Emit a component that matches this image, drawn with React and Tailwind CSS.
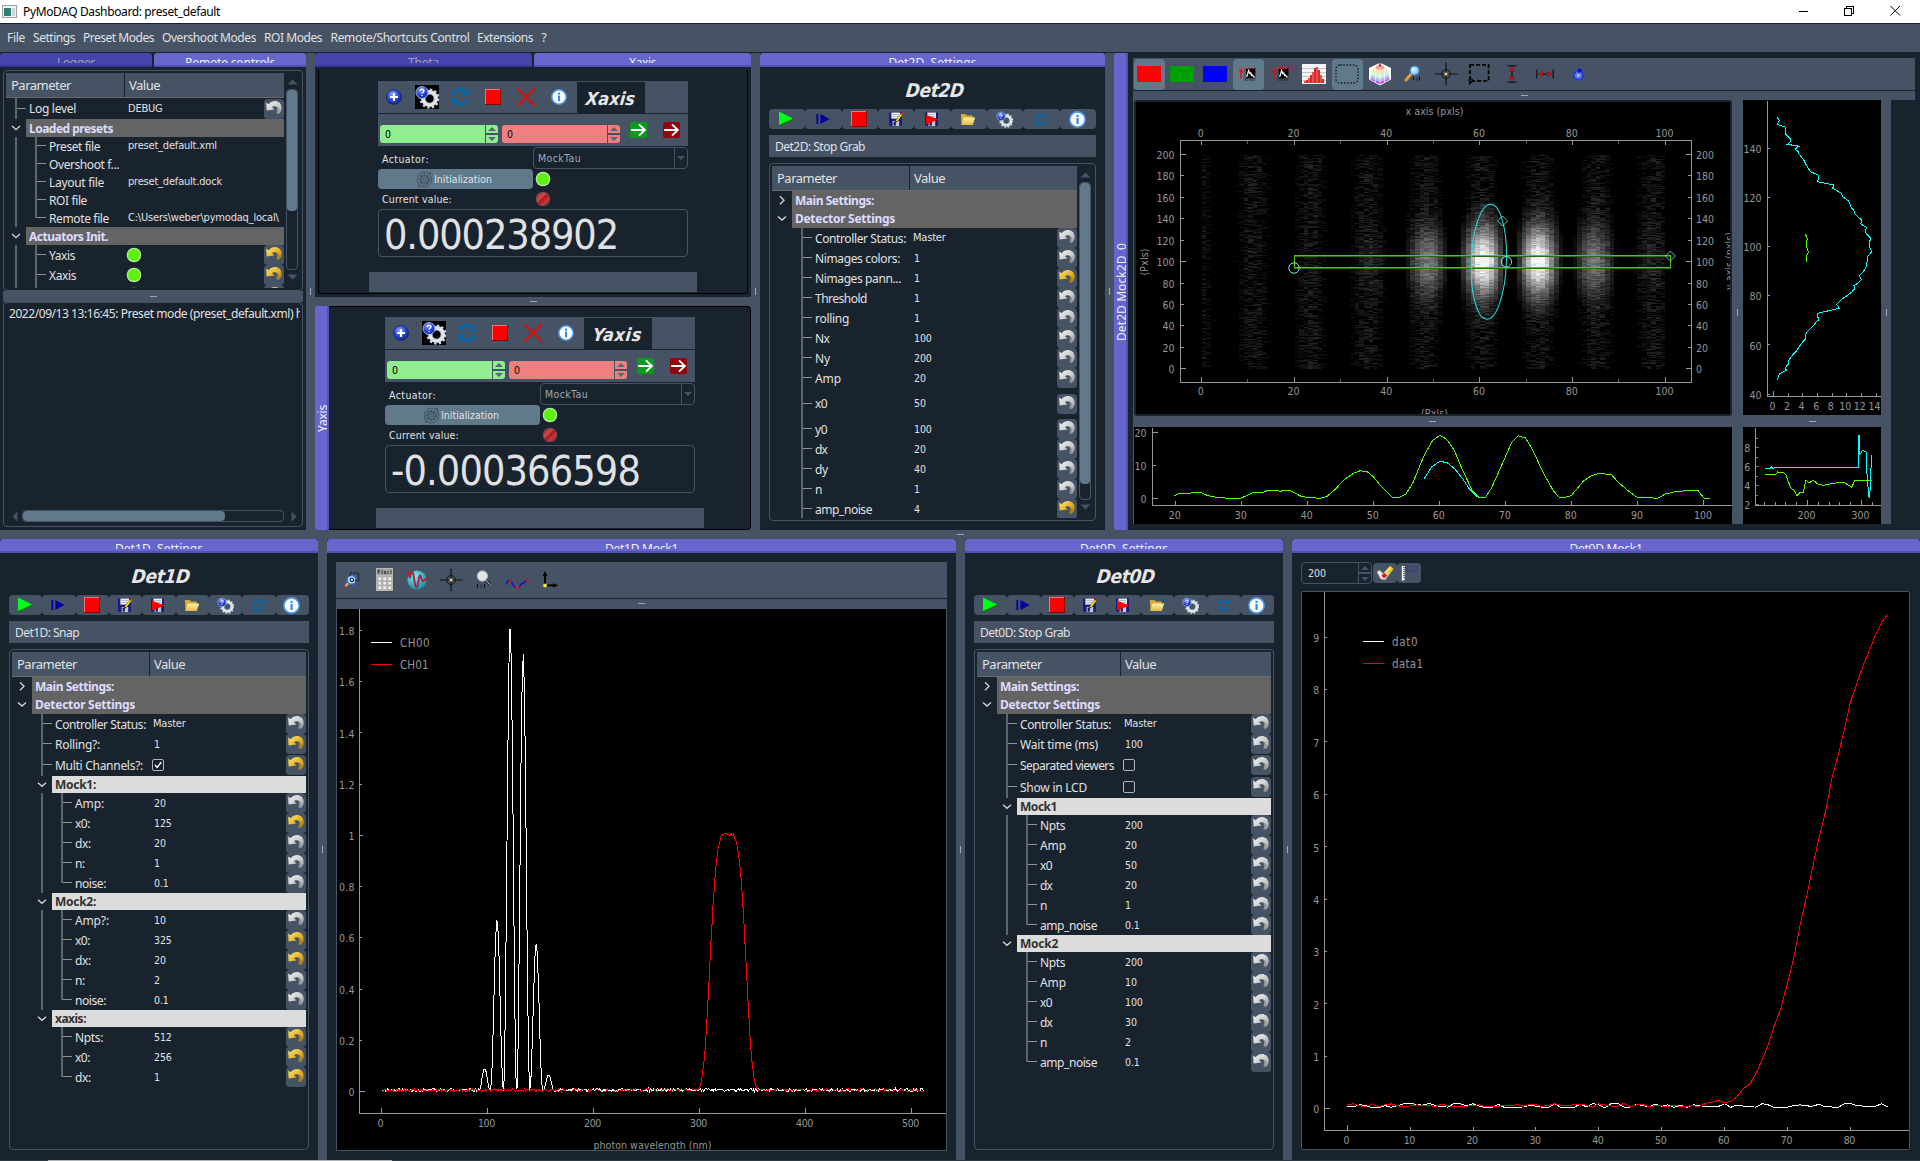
import React, { useLayoutEffect, useRef } from 'react';

/* ---------- text helpers ---------- */

const UI = "font-['Noto_Sans',sans-serif]";
const TH = "font-['DejaVu_Sans_Condensed','DejaVu_Sans',sans-serif]";

// Text whose tracking is adjusted so that it fills the width w.
function T({ w, children, className = '' }) {
  const ref = useRef(null);
  useLayoutEffect(() => {
    const el = ref.current;
    if (!el || !w) return;
    el.style.letterSpacing = '0px';
    const n = String(children).length;
    const natural = el.getBoundingClientRect().width;
    el.style.letterSpacing = (w - natural) / n + 'px';
  }, [w, children]);
  return <span ref={ref} className={'inline-block whitespace-pre ' + className}>{children}</span>;
}

function VT({ w, children, className = '' }) {
  const ref = useRef(null);
  useLayoutEffect(() => {
    const el = ref.current;
    el.style.letterSpacing = '0px';
    const natural = el.getBoundingClientRect().height;
    el.style.letterSpacing = (w - natural) / String(children).length + 'px';
  }, [w, children]);
  return <span ref={ref} className={'inline-block rotate-180 whitespace-pre [writing-mode:vertical-rl] ' + className}>{children}</span>;
}

/* ---------- icons ---------- */

function Defs() {
  return (
    <svg width="0" height="0" className="absolute">
      <defs>
        <linearGradient id="silver" x1="0" y1="0" x2="1" y2="1"><stop offset="0" stopColor="#f4f4f4" /><stop offset="0.6" stopColor="#c9c9c9" /><stop offset="1" stopColor="#8a8a8a" /></linearGradient>
        <linearGradient id="gold" x1="0" y1="0" x2="1" y2="1"><stop offset="0" stopColor="#ffe873" /><stop offset="0.6" stopColor="#e0ad20" /><stop offset="1" stopColor="#8f6a10" /></linearGradient>
        <radialGradient id="blueBall" cx="0.4" cy="0.3" r="0.8"><stop offset="0" stopColor="#8aa4ff" /><stop offset="0.5" stopColor="#2c49dd" /><stop offset="1" stopColor="#0c1a8c" /></radialGradient>
        <radialGradient id="greenLed" cx="0.5" cy="0.5" r="0.5"><stop offset="0" stopColor="#62f410" /><stop offset="0.75" stopColor="#5cf00c" /><stop offset="1" stopColor="#7cff40" /></radialGradient>
        <linearGradient id="redLed" x1="0" y1="0" x2="1" y2="1"><stop offset="0" stopColor="#8c161c" /><stop offset="0.35" stopColor="#cc4c50" /><stop offset="0.5" stopColor="#b0141c" /><stop offset="0.7" stopColor="#c23c40" /><stop offset="1" stopColor="#80161a" /></linearGradient>
        <radialGradient id="lens" cx="0.4" cy="0.4" r="0.7"><stop offset="0" stopColor="#e8f8ff" /><stop offset="1" stopColor="#5cb0f0" /></radialGradient>
        <radialGradient id="globe" cx="0.4" cy="0.3" r="0.8"><stop offset="0" stopColor="#7fe8f4" /><stop offset="1" stopColor="#0f7f9c" /></radialGradient>
        <linearGradient id="folder" x1="0" y1="0" x2="0" y2="1"><stop offset="0" stopColor="#fff3a8" /><stop offset="1" stopColor="#e3b944" /></linearGradient>
      </defs>
    </svg>
  );
}

const Undo = ({ gold }) => (
  <svg width="20" height="20" viewBox="0 0 20 20" className="block">
    <rect width="20" height="20" rx="3.5" fill="#455364" />
    <path d="M2.2 3.6 L4.6 5.2 C7.6 1.6 12.4 0.9 15.4 3.6 C18.6 6.6 18.8 12 14.8 15 C15.4 11.4 14.8 8.4 12 7.4 C10.4 6.9 9 7.2 8 8 L10.4 10.4 L2.6 11.4 Z" fill={gold ? 'url(#gold)' : 'url(#silver)'} />
    <path d="M10.2 10.4 L13.2 11 L12.4 14.2 L14.8 15 C15.4 11.4 14.8 8.4 12 7.4 C13.4 8.8 13.4 9.6 13 10.8 Z" fill={gold ? '#b08518' : '#9a9a9a'} />
  </svg>
);

const Led = ({ red, size = 16 }) => (
  <svg width={size} height={size} viewBox="0 0 16 16" className="block shrink-0">
    <circle cx="8" cy="8" r="7.3" fill={red ? '#5a4c4e' : '#cfdcc8'} />
    <circle cx="8" cy="8" r="6.5" fill={red ? 'url(#redLed)' : 'url(#greenLed)'} />
  </svg>
);

const Stop = ({ s = 16 }) => (
  <svg width={s} height={s} viewBox="0 0 16 16" shapeRendering="crispEdges" className="block">
    <rect width="16" height="16" fill="#8c0000" /><rect width="15" height="15" fill="#ff7070" /><rect x="1" y="1" width="14" height="14" fill="#ff0000" />
  </svg>
);

const Plus = () => (
  <svg width="16" height="16" viewBox="0 0 16 16" className="block">
    <circle cx="8" cy="8" r="7.3" fill="url(#blueBall)" stroke="#0c1a70" strokeWidth="0.8" />
    <path d="M8 4 V12 M4 8 H12" stroke="#fff" strokeWidth="2.2" />
  </svg>
);

const Refresh = ({ s = 20 }) => (
  <svg width={s} height={s} viewBox="0 0 20 20" className="block">
    <path d="M2.4 8 C3.6 3.2 9.6 0.6 14.6 4.2" fill="none" stroke="#0a64a4" strokeWidth="3.2" />
    <path d="M19 1 V8.6 H11 Z" fill="#0a64a4" />
    <path d="M17.6 12 C16.4 16.8 10.4 19.4 5.4 15.8" fill="none" stroke="#0a64a4" strokeWidth="3.2" />
    <path d="M1 19 V11.4 H9 Z" fill="#0a64a4" />
  </svg>
);

const Info = ({ s = 16 }) => (
  <svg width={s} height={s} viewBox="0 0 16 16" className="block">
    <circle cx="8" cy="8" r="7.2" fill="#fff" stroke="#4c9be8" strokeWidth="1.5" />
    <rect x="7" y="6.6" width="2.1" height="5.6" fill="#2b8be8" /><rect x="7" y="3.6" width="2.1" height="2" fill="#2b8be8" />
  </svg>
);

const Cross = () => (
  <svg width="20" height="20" viewBox="0 0 20 20" className="block">
    <path d="M1.5 1.5 L18.5 18.5 M18.5 1.5 L1.5 18.5" stroke="#8a3030" strokeWidth="2.2" />
    <path d="M1.5 1.5 L18.5 18.5 M18.5 1.5 L1.5 18.5" stroke="#ff0000" strokeWidth="1.5" />
  </svg>
);

const Gear = ({ s = 24, bg }) => (
  <svg width={s} height={s} viewBox="0 0 24 24" className="block">
    {bg && <rect width="24" height="24" fill="#000" />}
    <circle cx="14.6" cy="13.6" r="6.4" fill="none" stroke="#dfe5ea" strokeWidth="4.2" />
    <circle cx="14.6" cy="13.6" r="9" fill="none" stroke="#d3dade" strokeWidth="2.2" strokeDasharray="2.4 2.3" />
    <circle cx="14.6" cy="13.6" r="4.4" fill="none" stroke="#8f9aa2" strokeWidth="0.8" />
    <circle cx="7" cy="7.5" r="6" fill="url(#blueBall)" stroke="#a9bfe0" strokeWidth="0.9" />
    <path d="M5.2 6 C5.4 3.6 9.2 3.8 8.9 6 C8.7 7.3 7.1 7.2 7.1 8.6 M7.1 10 V11.1" fill="none" stroke="#fff" strokeWidth="1.4" />
  </svg>
);

const GoArrow = ({ color }) => (
  <svg width="17" height="16" viewBox="0 0 17 16" className="block">
    <rect width="17" height="16" rx="2" fill={color} />
    <path d="M1.2 8 H14.4 M9 2.4 L14.9 8 L9 13.6" fill="none" stroke="#fff" strokeWidth="1.9" />
  </svg>
);

const Play = () => (
  <svg width="17" height="16" viewBox="0 0 17 16" className="block">
    <path d="M1 1 L16.4 8.2 L1 15.4 Z" fill="#007a00" /><path d="M1 0.6 L15 7.4 L1 14 Z" fill="#00ff1a" />
  </svg>
);

const Step = () => (
  <svg width="14" height="12" viewBox="0 0 14 12" className="block">
    <rect x="0.4" y="1" width="1.8" height="10" fill="#0000a0" /><path d="M4.4 1 L13.6 6 L4.4 11 Z" fill="#0000a0" />
  </svg>
);

const Floppy = ({ snap }) => (
  <svg width="16" height="16" viewBox="0 0 16 16" className="block">
    <path d="M1 1.6 H14 V15 H2.4 L1 13.6 Z" fill="#1a1a80" />
    <rect x="3.4" y="1.6" width="8.6" height="6" fill="#f2f2f2" />
    <path d="M4.2 3.4 H11 M4.2 5.4 H11" stroke="#8c9fb8" strokeWidth="0.7" />
    <rect x="4.6" y="10" width="6.6" height="5" fill="#c4c8d0" /><rect x="5.6" y="10.8" width="2.2" height="3.8" fill="#15155e" />
    {snap ? <path d="M2 3.8 L14.6 8.6 L2 13.4 Z" fill="#ff0000" /> : (
      <g><path d="M7.6 9.6 L13 2.6 L14.6 3.8 L9.4 10.6 L7 11.6 Z" fill="#ffe800" stroke="#222" strokeWidth="0.4" /><path d="M13 2.6 L14.2 0.8 L16 2.2 L14.8 3.8 Z" fill="#e02020" /><path d="M7.6 9.6 L9.2 10.6 L7 11.6 Z" fill="#111" /></g>
    )}
  </svg>
);

const Folder = () => (
  <svg width="16" height="14" viewBox="0 0 16 14" className="block">
    <path d="M0.8 2 H5.6 L7 3.6 H12.6 V12.6 H1.6 Z" fill="#d8a93a" /><path d="M3.6 5.4 H15.2 L12.8 13 H1.2 Z" fill="url(#folder)" />
    <path d="M12 2.2 L14.8 0.8 L15.6 3" fill="none" stroke="#1d5d80" strokeWidth="1.4" />
  </svg>
);

const InitGear = () => (
  <svg width="17" height="17" viewBox="0 0 17 17" className="block" fill="none" stroke="#3f5160">
    <path d="M3 13.4 A7.5 7.5 0 0 1 13 2.4 M14 3.6 A7.5 7.5 0 0 1 4 14.6" strokeWidth="1" />
    <circle cx="8.5" cy="8.5" r="4.6" strokeWidth="1.8" strokeDasharray="2.2 1.1" /><circle cx="8.5" cy="8.5" r="3.8" strokeWidth="0.9" /><circle cx="8.5" cy="8.5" r="1.8" strokeWidth="1" />
    <rect x="13" y="1.4" width="2" height="2" fill="#3f5160" stroke="none" /><rect x="2" y="13.6" width="2" height="2" fill="#3f5160" stroke="none" />
  </svg>
);

const RoiIcon = () => (
  <svg width="20" height="20" viewBox="0 0 20 20" className="block">
    <path d="M1 4 H8" stroke="#ff2020" strokeDasharray="2 1" strokeWidth="1" />
    <path d="M3 14.6 V7" stroke="#ff0000" strokeWidth="1.2" /><path d="M0.6 8.4 L3 4.8 L5.4 8.4 Z" fill="#ff0000" />
    <rect x="8" y="4" width="9.4" height="10.4" fill="#000" /><path d="M8 4.4 H17.4" stroke="#ff2020" strokeDasharray="2 1" />
    <path d="M8.6 13 L9.6 10 L10.6 6.4 L11.8 9.6 L12.8 9 L13.6 11.6 L14.6 11 L15.6 13 L17.2 13" fill="none" stroke="#fff" strokeWidth="1.2" />
    <path d="M6.6 16 H17" stroke="#303030" strokeDasharray="1.4 0.8" strokeWidth="1.6" /><path d="M7 5 V15" stroke="#303030" strokeDasharray="1.4 0.8" strokeWidth="1.2" />
  </svg>
);

const Histo = () => (
  <svg width="24" height="20" viewBox="0 0 24 20" shapeRendering="crispEdges" className="block">
    <rect width="24" height="20" fill="#f4f4f4" /><path d="M0 4.5 H24 M0 8.5 H24 M0 12.5 H24 M0 16.5 H24" stroke="#c4c4c4" />
    {[[3, 2], [5, 3], [7, 5], [9, 8], [11, 11], [13, 15], [15, 16], [17, 13], [19, 8], [21, 4]].map(([x, h], i) => <rect key={x} x={x - 1} y={19 - h} width="2" height={h} fill={i % 2 ? '#d82828' : '#e85050'} />)}
  </svg>
);

const RoiDash = () => (
  <svg width="24" height="20" viewBox="0 0 24 20" className="block"><rect x="1" y="1" width="22" height="18" rx="4" fill="none" stroke="#1a2028" strokeWidth="1.4" strokeDasharray="1.6 1.6" /></svg>
);

const Cube = () => (
  <svg width="24" height="24" viewBox="0 0 24 24" className="block">
    <path d="M12 0.8 L23 6 V17.6 L12 23.4 L1 17.6 V6 Z" fill="#fff" />
    <path d="M12 1.4 L6 6 L12 8.6 L18 6 Z" fill="#ff9a9a" /><path d="M6 6 L12 8.6 L18 6 L20 9 L12 12 L4 9 Z" fill="#ffe0a8" />
    <path d="M4 9 L12 12 V17 L3 13.4 Z" fill="#c4f4b8" /><path d="M20 9 L12 12 V17 L21 13.4 Z" fill="#b8e8f8" />
    <path d="M3 13.4 L12 17 V20 L2.4 16.4 Z" fill="#b0b8ff" /><path d="M21 13.4 L12 17 V20 L21.6 16.4 Z" fill="#c0a8ff" />
    <path d="M2.4 16.4 L12 20 L21.6 16.4 L21 17.8 L12 22.6 L3 17.8 Z" fill="#b040f0" />
    <path d="M12 5 V22 M7.5 4 V20 M16.5 4 V20 M2 10 L12 14 L22 10" stroke="#fff" strokeWidth="0.8" fill="none" opacity="0.85" />
    <path d="M12 0.8 V5" stroke="#222" strokeWidth="1" />
  </svg>
);

const Zoom11 = () => (
  <svg width="18" height="18" viewBox="0 0 18 18" className="block">
    <path d="M7.6 8.4 L2 15" stroke="#e89a3a" strokeWidth="3" strokeLinecap="round" />
    <circle cx="10.6" cy="5.6" r="4.6" fill="url(#lens)" stroke="#3f7fd0" strokeWidth="1" />
    <path d="M9.5 11.5 V15.5 M13 12.5 V13.5 M13 14.5 V15.5 M15.5 11.5 V15.5" stroke="#111" strokeWidth="1" />
  </svg>
);

const ZoomGrey = () => (
  <svg width="20" height="22" viewBox="0 0 20 22" className="block">
    <path d="M11 10 L16 15.6" stroke="#222" strokeWidth="3" /><path d="M11 10 L16 15.6" stroke="#ddd" strokeWidth="1" />
    <circle cx="8.4" cy="7" r="5.2" fill="#dfe7e0" stroke="#aab" strokeWidth="1" />
    <path d="M3.5 15 V19 M7 15.8 V16.8 M7 18 V19 M10.5 15 V19" stroke="#111" strokeWidth="1.1" />
  </svg>
);

const Crosshair = () => (
  <svg width="24" height="24" viewBox="0 0 24 24" className="block">
    <path d="M12 0.5 V23.5 M0.5 12 H23.5" stroke="#10151a" strokeWidth="1.2" /><circle cx="12" cy="12" r="4.4" fill="none" stroke="#10151a" strokeWidth="1" />
    <circle cx="12" cy="12" r="1.8" fill="#e8e060" stroke="#333" strokeWidth="0.5" />
  </svg>
);

const Lasso = () => (
  <svg width="22" height="22" viewBox="0 0 22 22" className="block">
    <rect x="2" y="1.8" width="18.6" height="16" fill="none" stroke="#000" strokeWidth="1.8" strokeDasharray="4 2" />
    <circle cx="2.8" cy="17.6" r="2" fill="#333" stroke="#000" /><path d="M3 18 L1.4 21.6" stroke="#000" strokeWidth="1.4" />
  </svg>
);

const VArrows = () => (
  <svg width="10" height="18" viewBox="0 0 10 18" className="block"><path d="M0.5 0.8 H9.5 M0.5 17.2 H9.5 M5 3 V15" stroke="#111" strokeWidth="1.2" /><path d="M2.6 6.4 L5 2 L7.4 6.4 Z M2.6 11.6 L5 16 L7.4 11.6 Z" fill="#e01010" stroke="#500" strokeWidth="0.4" /></svg>
);
const HArrows = () => (
  <svg width="18" height="10" viewBox="0 0 18 10" className="block"><path d="M0.8 0.5 V9.5 M17.2 0.5 V9.5 M3 5 H15" stroke="#111" strokeWidth="1.2" /><path d="M6.4 2.6 L2 5 L6.4 7.4 Z M11.6 2.6 L16 5 L11.6 7.4 Z" fill="#e01010" stroke="#500" strokeWidth="0.4" /></svg>
);
const Rotate = () => (
  <svg width="11" height="13" viewBox="0 0 11 13" className="block"><circle cx="5.4" cy="7.4" r="4.4" fill="#5a80c8" stroke="#1c2cff" strokeWidth="1.8" strokeDasharray="2 0.6" /><circle cx="5.4" cy="7.4" r="1.4" fill="#9fc0ff" /><path d="M5.4 0 L9.4 2.6 L5.4 5.2 Z" fill="#0000f0" /></svg>
);

const ZoomRoi = () => (
  <svg width="16" height="16" viewBox="0 0 16 16" className="block">
    <path d="M5 10 L1.6 14.2" stroke="#f0a050" strokeWidth="2.6" /><circle cx="7.6" cy="7.8" r="4.4" fill="#cfe6ff" stroke="#2c70e8" strokeWidth="1.6" />
    <circle cx="7.8" cy="7.8" r="1.8" fill="none" stroke="#111" strokeWidth="1.1" /><path d="M6 4 V1 H14.6 V8.4 H10" fill="none" stroke="#111" strokeDasharray="2 1" />
  </svg>
);
const Calculator = () => (
  <svg width="18" height="24" viewBox="0 0 18 24" className="block">
    <rect x="0" y="0" width="18" height="24" fill="#4d4d48" /><rect x="0" y="0" width="17" height="23" fill="#b9b9b3" /><rect x="1" y="1" width="15" height="6" fill="#a2a29c" />
    <path d="M2 2 V6 M2 2 H4 M2 4 H4 M6.5 2 Q5 4 6.5 6 M8 3 L10 6 M10 3 L8 6 M12 3 V6 M14.5 2 Q16 4 14.5 6" stroke="#222" strokeWidth="0.8" fill="none" />
    {[9, 13.5, 18].map((y) => [2, 7, 12].map((x) => <rect key={x + '-' + y} x={x} y={y} width="3.6" height="3.4" fill="#f2f2ee" stroke="#888" strokeWidth="0.4" />))}
  </svg>
);
const GlobeWave = () => (
  <svg width="24" height="22" viewBox="0 0 24 22" className="block">
    <circle cx="11" cy="11" r="9.6" fill="url(#globe)" /><path d="M0.8 4 C2 2 3 5 4 9 C5 2 6.6 1 7.6 6 C8.6 14 9.4 19 11 18 C12.4 16 12.6 7 14 6.4 C15.4 7 15.4 12 17 12 C18 12 18.4 9.4 23.4 9" fill="none" stroke="#a32438" strokeWidth="1.9" />
  </svg>
);
const Wave = () => (
  <svg width="24" height="12" viewBox="0 0 24 12" className="block">
    <path d="M1 6.5 C3 2 5 1 6.4 3.6 C8 7 9 9.6 12 9.6 C15 9.6 16 5 18 5 C20 5 20 2 23 2" fill="none" stroke="#1010c8" strokeWidth="1.6" />
    <path d="M3 3 L6.4 1 L6.4 4 Z M10 8 H14.6 L12.2 11.6 Z M19 1.6 H23.4 V4 Z" fill="#f01818" />
  </svg>
);
const AxesIcon = () => (
  <svg width="18" height="20" viewBox="0 0 18 20" className="block">
    <path d="M4 4 V15.4 H14" fill="none" stroke="#000" strokeWidth="1.8" /><path d="M1.8 6 L4 0.8 L6.2 6 Z M12 13.2 L17.4 15.4 L12 17.6 Z" fill="#000" /><circle cx="4" cy="15.4" r="2" fill="#f4e832" />
  </svg>
);
const Eraser = () => (
  <svg width="18" height="16" viewBox="0 0 18 16" className="block">
    <path d="M0.8 7 L3.6 5 L7 8.6 L14 1 L17.4 4 L9 15 L4.6 14 Z" fill="#f3efe6" stroke="#7a7a7a" strokeWidth="0.5" />
    <path d="M9.4 6.6 L14 1 L17.4 4 L12.4 9.6 Z" fill="#f4c21c" /><path d="M10.8 6.8 L14.4 2.6" stroke="#fff2a0" strokeWidth="1.2" /><path d="M5.4 10.4 L8.4 7.8 L11.4 10.8 L8 13.6 Z" fill="#e01c1c" />
  </svg>
);
const LcdRuler = () => (
  <svg width="19" height="16" viewBox="0 0 19 16" className="block">
    <rect x="1" y="1" width="3.6" height="14.4" fill="#fff" /><rect x="1" y="1" width="1" height="14.4" fill="#2c7fd0" /><path d="M4.6 2.5 H3 M4.6 4.5 H3 M4.6 6.5 H3 M4.6 8.5 H3 M4.6 10.5 H3 M4.6 12.5 H3" stroke="#333" strokeWidth="0.8" />
    <text x="5.4" y="7.4" fontFamily="Liberation Sans" fontSize="8.5" textLength="12.4" lengthAdjust="spacingAndGlyphs" fill="#343a86">123</text>
  </svg>
);

/* ---------- dock furniture ---------- */

const VSplit = ({ top }) => (
  <div className="flex w-[9px] shrink-0 justify-center bg-[#455364]"><div className="h-[7px] w-px bg-[#9da9b5]" style={{ marginTop: top }} /></div>
);
const Dash = () => <div className="h-px w-[7px] bg-[#9da9b5]" />;

function Tab({ children, dim, w }) {
  return (
    <div className={`h-[14px] flex-1 rounded-t-[3px] border-b-2 ${dim ? 'border-[#3737a0] bg-[#4444aa]' : 'border-[#5151b8] bg-[#6666cc]'}`}>
      <div className={`flex h-[10px] justify-center overflow-hidden pt-[1px] text-[12px] leading-[17px] ${dim ? 'text-[#a0a0b8]' : 'text-[#f0f0ff]'} ${UI}`}><T w={w}>{children}</T></div>
    </div>
  );
}

function VTab({ children, w }) {
  return (
    <div className={`flex w-[14px] shrink-0 items-center justify-center overflow-hidden rounded-l-[3px] border-r-2 border-[#5151b8] bg-[#6666cc] pl-[3px] text-[12px] leading-[14px] text-[#f0f0ff] ${UI}`}>
      <VT w={w}>{children}</VT>
    </div>
  );
}

const Up = ({ c = '#455364' }) => <svg width="11" height="6" viewBox="0 0 11 6" className="block"><path d="M0.5 5.5 L5.5 0.5 L10.5 5.5 Z" fill={c} /></svg>;
const Down = ({ c = '#455364' }) => <svg width="11" height="6" viewBox="0 0 11 6" className="block"><path d="M0.5 0.5 L5.5 5.5 L10.5 0.5 Z" fill={c} /></svg>;

function VScroll({ handle }) {
  return (
    <div className="flex w-[12px] shrink-0 flex-col items-center pb-[8px] pt-[6px]">
      <Up />
      <div className="mt-[4px] w-[12px] flex-1 rounded-[4px] border border-[#455364] p-0"><div className="w-full rounded-[4px] bg-[#60798b]" style={{ height: handle }} /></div>
      <div className="mt-[4px]"><Down /></div>
    </div>
  );
}

/* ---------- parameter tree ---------- */

function Cell({ k }) {
  return (
    <svg width="20" height="100%" className="block shrink-0 overflow-hidden" shapeRendering="crispEdges">
      {(k === '|' || k === '+') && <rect x="9" y="0" width="2" height="100%" fill="#5c676d" />}
      {k === 'L' && <rect x="9" y="0" width="2" height="50%" fill="#5c676d" />}
      {(k === '+' || k === 'L') && <rect x="11" y="47%" width="9" height="1" fill="#8c9496" />}
      {k === 'v' && <svg x="5" y="35%" width="10" height="6" shapeRendering="auto"><path d="M1 0.8 L5 4.4 L9 0.8" fill="none" stroke="#d5d7d9" strokeWidth="1.3" /></svg>}
      {k === '>' && <svg x="7" y="24%" width="7" height="10" shapeRendering="auto"><path d="M1 1 L5 5 L1 9" fill="none" stroke="#d5d7d9" strokeWidth="1.3" /></svg>}
    </svg>
  );
}

// Row: [cells, label, value, kind, height, label width]
function Row({ r, split }) {
  const [cells, label, value, kind, h, lw] = r;
  const n = cells.length;
  const group = kind === 'g' || kind === 'G';
  return (
    <div className="flex shrink-0" style={{ height: h }}>
      {cells.split('').map((k, i) => <Cell key={i} k={k} />)}
      {group ? (
        <div className={`flex flex-1 items-center pl-[3px] text-[12px] font-bold ${UI} ${kind === 'g' ? 'bg-[#646464] pt-[1px] text-[#dcdcff]' : 'bg-[#dcdcdc] text-[#323232]'}`}><T w={lw}>{label}</T></div>
      ) : (
        <>
          <div className={`flex items-center overflow-hidden pl-[3px] pt-[1px] text-[12px] text-[#e0e1e3] ${UI}`} style={{ width: split - n * 20 + 1 }}><T w={lw} className="tracking-[-0.3px]">{label}</T></div>
          <div className={`flex min-w-0 flex-1 items-center overflow-hidden text-[10.5px] text-[#e0e1e3] ${TH} ${value === 'on' || value === 'off' ? 'pl-[1px]' : value === 'led' ? 'pl-0' : /^[A-Zp]/.test(value) ? 'pl-[2px] pt-[1px]' : 'pl-[3px] pt-[1px]'}`}>
            {value === 'on' || value === 'off' ? (
              <span className="flex h-[12px] w-[12px] items-center justify-center rounded-[2px] border border-[#b0b4b8]">
                {value === 'on' && <svg width="8" height="8" viewBox="0 0 8 8"><path d="M1 4 L3.2 6.4 L7.2 1.2" fill="none" stroke="#fff" strokeWidth="1.5" /></svg>}
              </span>
            ) : value === 'led' ? <Led /> : <span className={`whitespace-nowrap ${/^[A-Zp]/.test(value) ? 'text-[11px] tracking-[-0.2px]' : 'tracking-[-0.1px]'}`}>{value}</span>}
          </div>
          {kind !== '' && <div className="flex w-[20px] items-center"><Undo gold={kind === 'y'} /></div>}
        </>
      )}
    </div>
  );
}

function Tree({ rows, split }) {
  return (
    <div className="flex min-w-0 flex-1 flex-col overflow-hidden">
      <div className={`flex h-[25px] shrink-0 items-center border-b border-[#6b6b6b] bg-[#455364] text-[13px] text-[#e0e1e3] ${UI}`}>
        <div className="flex h-full items-center border-r border-[#19232d] pl-[5px] pt-[2px]" style={{ width: split }}><T w={60}>Parameter</T></div>
        <div className="pl-[4px] pt-[2px]"><T w={31}>Value</T></div>
      </div>
      {rows.map((r, i) => <Row key={i} r={r} split={split} />)}
    </div>
  );
}

const u = (cells, label, value, gold, lw, h = 20) => [cells, label, value, gold ? 'y' : 'w', h, lw];

const rowsLeft = [
  u('+', 'Log level', 'DEBUG', false, 47, 21),
  ['v', 'Loaded presets', '', 'g', 18, 84],
  ['|+', 'Preset file', 'preset_default.xml', '', 18, 51],
  ['|+', 'Overshoot f...', '', '', 18, 70],
  ['|+', 'Layout file', 'preset_default.dock', '', 18, 55],
  ['|+', 'ROI file', '', '', 18, 38],
  ['|L', 'Remote file', 'C:\\Users\\weber\\pymodaq_local\\', '', 18, 60],
  ['v', 'Actuators Init.', '', 'g', 18, 79],
  u('|+', 'Yaxis', 'led', true, 26),
  u('|+', 'Xaxis', 'led', true, 27),
  u('|+', '', 'led', true, 0),
];

const head = [
  ['>', 'Main Settings:', '', 'g', 18, 79],
  ['v', 'Detector Settings', '', 'g', 19, 100],
  u('.+', 'Controller Status:', 'Master', false, 91),
];

const rows2D = [
  ...head,
  u('.+', 'Nimages colors:', '1', false, 85), u('.+', 'Nimages pann...', '1', true, 86), u('.+', 'Threshold', '1', false, 52), u('.+', 'rolling', '1', false, 34),
  u('.+', 'Nx', '100', false, 14), u('.+', 'Ny', '200', false, 15), u('.+', 'Amp', '20', false, 26), u('.+', 'x0', '50', false, 12, 31),
  u('.+', 'y0', '100', false, 12), u('.+', 'dx', '20', false, 12), u('.+', 'dy', '40', false, 13), u('.+', 'n', '1', false, 7), u('.+', 'amp_noise', '4', true, 57),
];

const rows1D = [
  ...head,
  u('.+', 'Rolling?:', '1', true, 45), u('.+', 'Multi Channels?:', 'on', true, 88, 22),
  ['.v', 'Mock1:', '', 'G', 17, 41],
  u('.|+', 'Amp:', '20', false, 29), u('.|+', 'x0:', '125', true, 15), u('.|+', 'dx:', '20', false, 16), u('.|+', 'n:', '1', false, 10), u('.|L', 'noise:', '0.1', false, 31),
  ['.v', 'Mock2:', '', 'G', 17, 41],
  u('.|+', 'Amp?:', '10', false, 34), u('.|+', 'x0:', '325', true, 15), u('.|+', 'dx:', '20', true, 16), u('.|+', 'n:', '2', false, 10), u('.|L', 'noise:', '0.1', false, 31),
  ['.v', 'xaxis:', '', 'G', 17, 31],
  u('..+', 'Npts:', '512', true, 28), u('..+', 'x0:', '256', true, 15), u('..L', 'dx:', '1', true, 16),
];

const mock0 = (p, amp, x0, dx, n) => [
  u(p + '+', 'Npts', '200', false, 25), u(p + '+', 'Amp', amp, false, 26), u(p + '+', 'x0', x0, false, 12), u(p + '+', 'dx', dx, false, 12), u(p + '+', 'n', n, false, 7), u(p + 'L', 'amp_noise', '0.1', false, 57),
];
const rows0D = [
  ...head,
  u('.+', 'Wait time (ms)', '100', false, 78), u('.+', 'Separated viewers', 'off', false, 94, 22), u('.+', 'Show in LCD', 'off', false, 67, 22),
  ['.v', 'Mock1', '', 'G', 17, 37],
  ...mock0('.|', '20', '50', '20', '1'),
  ['.v', 'Mock2', '', 'G', 17, 38],
  ...mock0('..', '10', '100', '30', '2'),
];

/* ---------- detector settings dock ---------- */

function DetSettings({ name, status, statusW, rows, split, width, scroll, tabW }) {
  const icons = [<Play />, <Step />, <Stop />, <Floppy />, <Floppy snap />, <Folder />, <Gear s={17} />, <Refresh s={13} />, <Info s={17} />];
  return (
    <div className="flex shrink-0 flex-col bg-[#19232d]" style={{ width }}>
      <div className="flex"><Tab w={tabW}>{name + '  Settings'}</Tab></div>
      <div className={`flex h-[42px] items-center justify-center pl-[4px] pt-[4px] text-[19px] font-bold italic text-[#e6e6e6] ${TH}`}><span className="-skew-x-6"><T w={61}>{name}</T></span></div>
      <div className="flex px-[9px]">
        {icons.map((ic, i) => <div key={i} className="flex h-[20px] flex-1 items-center justify-center rounded-[4px] bg-[#455364] pr-[1px]">{ic}</div>)}
      </div>
      <div className={`mx-[9px] mt-[6px] flex h-[22px] shrink-0 items-center bg-[#455364] pl-[6px] pt-[1px] text-[12px] text-[#e0e1e3] ${UI}`}><T w={statusW}>{status}</T></div>
      <div className={`mx-[9px] mt-[6px] flex min-h-0 flex-1 rounded-[4px] border border-[#455364] p-[2px] ${scroll ? 'mb-[9px] pr-[4px]' : 'mb-[10px]'}`}>
        <Tree rows={rows} split={split} />
        {scroll && <div className="ml-[2px] flex"><VScroll handle={301} /></div>}
      </div>
    </div>
  );
}

/* ---------- actuator dock ---------- */

function Spin({ green }) {
  return (
    <div className={`flex h-[18px] w-[118px] rounded-[3px] ${green ? 'bg-[#90ee90]' : 'bg-[#f08080]'}`}>
      <div className={`flex flex-1 items-center pl-[5px] pt-[2px] text-[10.5px] text-black ${TH}`}>0</div>
      <div className="flex w-[13px] flex-col justify-between border-l border-[#455364]">
        <div className="flex h-[9px] items-center justify-center border-b border-[#455364]"><svg width="8" height="4"><path d="M0 4 L4 0 L8 4Z" fill="#5a6672" /></svg></div>
        <div className="flex h-[9px] items-center justify-center border-t border-[#455364]"><svg width="8" height="4"><path d="M0 0 L4 4 L8 0Z" fill="#5a6672" /></svg></div>
      </div>
    </div>
  );
}

function Actuator({ name, value, valueW }) {
  const icons = [<Plus />, <Gear bg />, <Refresh />, <Stop />, <Cross />, <Info />];
  return (
    <div className="flex w-[328px] flex-col">
      <div className="ml-[9px] flex w-[310px] flex-col">
        <div className="flex h-[32px] bg-[#455364]">
          {icons.map((ic, i) => <div key={i} className="flex w-[33.1px] items-center justify-center pr-[2px]">{ic}</div>)}
          <div className={`mt-[1px] flex w-[68px] items-center justify-center bg-[#19232d] pl-[1px] pt-[1px] text-[18px] font-bold italic text-[#e6e6e6] ${TH}`}><span className="-skew-x-6"><T w={52}>{name}</T></span></div>
        </div>
        <div className="mt-[1px] flex h-[32px] items-start bg-[#455364] pl-[2px]">
          <div className="mt-[11px] flex gap-[4px]"><Spin green /><Spin /></div>
          <div className="ml-[10px] mt-[8px]"><GoArrow color="#0b9a1c" /></div>
          <div className="ml-[16px] mt-[8px]"><GoArrow color="#94060e" /></div>
        </div>
        <div className="mt-[1px] flex h-[22px]">
          <div className={`flex w-[155px] items-center pl-[4px] pt-[3px] text-[10.5px] text-[#e0e1e3] ${TH}`}><T w={47}>Actuator:</T></div>
          <div className="flex flex-1 rounded-[4px] border border-[#455364]">
            <div className={`flex flex-1 items-center pl-[4px] pt-[2px] text-[10.5px] text-[#9da9b5] ${TH}`}><T w={43}>MockTau</T></div>
            <div className="flex w-[13px] items-center justify-center border-l border-[#455364]"><svg width="8" height="4"><path d="M0 0 L4 4 L8 0Z" fill="#455364" /></svg></div>
          </div>
        </div>
        <div className="flex h-[20px] items-center">
          <div className={`flex h-full w-[155px] items-center rounded-[4px] bg-[#60798b] pl-[38px] text-[10.5px] text-[#dfe5ea] ${TH}`}><InitGear /><span className="ml-[1px] pt-[2px]"><T w={58}>Initialization</T></span></div>
          <div className="ml-[2px]"><Led /></div>
        </div>
        <div className="flex h-[20px] items-center">
          <div className={`flex w-[157px] items-center pl-[4px] pt-[2px] text-[10.5px] text-[#e0e1e3] ${TH}`}><T w={70}>Current value:</T></div>
          <Led red />
        </div>
        <div className={`flex h-[48px] items-center rounded-[4px] border border-[#455364] pl-[5px] pt-[5px] text-[41px] leading-none text-[#e0e1e3] ${TH}`}><T w={valueW}>{value}</T></div>
      </div>
      <div className="mt-[15px] h-[20px] bg-[#455364]" />
    </div>
  );
}

/* ---------- charts ---------- */

function rng(seed) {
  let s = seed;
  return () => { s = (s * 1664525 + 1013904223) % 4294967296; return s / 4294967296; };
}
const scale = (str, ox, oy, kx, ky) => str.trim().split(/\s+/).map((p) => { const [x, y] = p.split(',').map(Number); return (ox + x / kx).toFixed(1) + ',' + (oy + y / ky).toFixed(1); }).join(' ');

const AX = '#969696';
const Label = ({ x, y, a = 'middle', children, s = 10.5, w, ...rest }) => (
  <text x={x} y={y} textAnchor={a} fontFamily="'DejaVu Sans Condensed','DejaVu Sans',sans-serif" fontSize={s} fill={AX} dominantBaseline="central" textLength={w} {...rest}>{children}</text>
);

// Stripe pattern with noise, binned to grey levels, one path for each level.
function imagePaths() {
  const r = rng(7);
  const levels = {};
  const cw = 463.5 / 100, ch = 214 / 200;
  for (let i = 0; i < 100; i++) {
    const c = Math.cos((Math.PI * (i + 0.5 - 60.5)) / 12.35) ** 2;
    const gx = Math.exp(-((i + 0.5 - 66.6) ** 2) / (2 * 13.2 ** 2));
    for (let j = 0; j < 200; j++) {
      const gy = Math.exp(-((j - 100) ** 2) / (2 * 22 ** 2));
      const v = (22 * gx * gy + 3.8 * r()) * c;
      let g = Math.round(((v - 0.8) / 20.5) * 255);
      if (g < 6) continue;
      g = Math.min(244, Math.round(g / 6) * 6);
      const x0 = (1201.8 + i * cw).toFixed(2), x1 = (1201.8 + (i + 1) * cw).toFixed(2);
      const y0 = (368.5 - (j + 1) * ch).toFixed(2), y1 = (368.5 - j * ch).toFixed(2);
      (levels[g] = levels[g] || []).push(`M${x0} ${y0}H${x1}V${y1}H${x0}z`);
    }
  }
  return Object.entries(levels).map(([g, p]) => [g, p.join('')]);
}
const IMG = imagePaths();

function Image2D() {
  const X = (v) => 1201.5 + v * 4.638;
  const Y = (v) => 368.7 - v * 1.071;
  const ys = [0, 20, 40, 60, 80, 100, 120, 140, 160, 180, 200];
  const xs = [0, 20, 40, 60, 80, 100];
  return (
    <svg width="594" height="312" viewBox="1136 102 594 312" className="block bg-black">
      <g shapeRendering="crispEdges">{IMG.map(([g, d]) => <path key={g} d={d} fill={`rgb(${g},${g},${g})`} />)}</g>
      <path d="M1180.5 140.5 H1691.5 V382.5 H1180.5 Z" fill="none" stroke={AX} shapeRendering="crispEdges" />
      <g stroke={AX} shapeRendering="crispEdges">
        {ys.map((v) => { const l = v % 200 === 0 || v === 100 ? 5 : 3; return <path key={v} d={`M1181 ${Y(v)} h${l} M1691 ${Y(v)} h-${l}`} />; })}
        {xs.map((v) => <path key={v} d={`M${X(v)} 141 v4 M${X(v)} 382 v-5`} />)}
        {[10, 30, 50, 70, 90].map((v) => <path key={v} d={`M${X(v)} 141 v3 M${X(v)} 382 v-3`} opacity="0.6" />)}
      </g>
      {ys.map((v) => <g key={v}><Label x="1174.5" y={Y(v) + 0.5} a="end">{v}</Label><Label x="1696" y={Y(v) + 0.5} a="start">{v}</Label></g>)}
      {xs.map((v) => <g key={v}><Label x={X(v) - 0.7} y="133">{v}</Label><Label x={X(v) - 0.7} y="391">{v}</Label></g>)}
      <Label x="1434.5" y="110.5" w={58}>x axis (pxls)</Label>
      <Label x="1434.5" y="412.5" w={27}>(Pxls)</Label>
      <Label x="0" y="0" w={27} transform="translate(1143.5 262) rotate(-90)">(Pxls)</Label>
      <Label x="0" y="0" w={58} transform="translate(1729 261) rotate(-90)">y axis (pxls)</Label>
      <g shapeRendering="crispEdges" fill="none">
        <rect x="1294.5" y="256.5" width="376" height="12" stroke="#2a6a10" />
        <rect x="1294.5" y="255.5" width="376" height="12" stroke="#50c810" />
      </g>
      <ellipse cx="1488.8" cy="261.7" rx="17.6" ry="57.6" transform="rotate(2 1488.8 261.7)" fill="none" stroke="#20e0e0" strokeWidth="1" />
      <g fill="none" stroke="#80e8e8" strokeWidth="1">
        <circle cx="1294" cy="268" r="5.2" /><circle cx="1506.4" cy="261.8" r="5.2" />
        <path d="M1502.6 216 l5 5 l-5 5 l-5 -5 z M1670.4 251 l5 5 l-5 5 l-5 -5 z" opacity="0.8" />
      </g>
    </svg>
  );
}

function SideProfile() {
  const cy = '712,235 718,245 712,256 738,265 737,285 751,300 750,310 742,316 778,322 765,330 777,345 800,380 812,398 834,408 832,428 882,438 878,448 903,462 908,473 925,485 933,505 942,515 945,525 965,543 962,555 980,565 976,575 990,595 988,610 995,637 983,652 978,685 958,710 964,722 942,740 945,748 918,772 890,796 898,808 834,823 836,842 820,860 800,880 797,900 783,915 770,935 745,965 745,975 735,988 740,994 718,1005 712,1022';
  // small jitter between the coarse points of the trace
  const r = rng(3);
  const raw = cy.split(' ').map((p) => p.split(',').map(Number));
  const fine = [];
  raw.forEach((p, i) => {
    fine.push(p);
    const q = raw[i + 1];
    if (q && q[1] - p[1] > 14) fine.push([(p[0] + q[0]) / 2 + (r() - 0.5) * 8, (p[1] + q[1]) / 2]);
  });
  const gr = '796,585 802,598 799,620 805,640 800,650 799,668';
  const Y = (v) => 395 - (v - 40) * 2.46;
  return (
    <svg width="138" height="315" viewBox="1743 101 138 315" className="block bg-black" shapeRendering="crispEdges">
      <path d="M1767.5 102 V397.5 H1881" fill="none" stroke={AX} />
      {[40, 60, 80, 100, 120, 140].map((v) => <g key={v}><path d={`M1768 ${Y(v)} h2`} stroke={AX} /><Label x="1761.5" y={Y(v) + 0.8} a="end">{v}</Label></g>)}
      {[0, 2, 4, 6, 8, 10, 12, 14].map((v) => <g key={v}><path d={`M${1773.5 + v * 7.33} 397 v-${v === 0 ? 5 : 3}`} stroke={AX} /><Label x={1772.5 + v * 7.28} y="406.5">{v}</Label></g>)}
      <polyline points={scale(fine.map((p) => p.join(',')).join(' '), 1540, 40, 3, 3)} fill="none" stroke="#00ffff" />
      <polyline points={scale(gr, 1540, 40, 3, 3)} fill="none" stroke="#50ff00" />
    </svg>
  );
}

function BottomProfile() {
  const gr = '158,317 170,310 195,310 205,307 222,307 240,317 262,322 290,325 320,325 350,308 375,307 388,301 408,301 418,304 428,300 440,301 468,319 482,322 515,325 532,319 550,300 575,268 597,250 613,242 630,245 645,260 665,290 692,322 712,321 725,312 742,278 770,195 790,152 808,136 825,148 843,180 862,235 888,303 903,322 921,321 935,293 960,225 985,155 1000,137 1018,144 1035,178 1060,245 1085,300 1100,322 1118,321 1130,317 1160,273 1180,257 1198,250 1229,254 1245,277 1270,303 1290,321 1342,325 1360,312 1390,304 1440,301 1455,324 1470,325';
  const cy = '770,266 788,231 808,214 826,218 845,237 865,268 880,296 900,320';
  return (
    <svg width="598" height="97" viewBox="1134 427 598 97" className="block bg-black" shapeRendering="crispEdges">
      <path d="M1152.5 428 V505.5 H1732" fill="none" stroke={AX} />
      {[0, 10, 20].map((v) => <g key={v}><path d={`M1153 ${498.5 - v * 3.29} h${v === 10 ? 3 : 5}`} stroke={AX} /><Label x="1146.5" y={498.9 - v * 3.29} a="end">{v}</Label></g>)}
      {[20, 30, 40, 50, 60, 70, 80, 90, 100].map((v) => <g key={v}><path d={`M${1175.3 + (v - 20) * 6.603} 505 v-${v === 100 ? 5 : 4}`} stroke={AX} /><Label x={1174.7 + (v - 20) * 6.603} y="514.5">{v}</Label></g>)}
      <polyline points={scale(gr, 1110, 390, 2.45, 3)} fill="none" stroke="#50ff00" />
      <polyline points={scale(cy, 1110, 390, 2.45, 3)} fill="none" stroke="#00ffff" />
    </svg>
  );
}

function LineoutSmall() {
  const cy = '675,1286 690,1286 695,1281 700,1287 705,1282 955,1282 955,1187 958,1187 960,1243 968,1231 978,1235 982,1320 987,1370 989,1375 993,1285 995,1245';
  const gr = '675,1303 708,1303 713,1296 730,1297 738,1305 745,1325 753,1345 762,1350 770,1367 780,1357 790,1357 797,1321 808,1328 820,1321 835,1333 850,1336 870,1332 900,1327 912,1327 935,1342 945,1321 996,1321';
  return (
    <svg width="138" height="97" viewBox="1743 427 138 97" className="block bg-black" shapeRendering="crispEdges">
      <path d="M1755.5 428 V505.5 H1881" fill="none" stroke={AX} />
      {[2, 3, 4, 5, 6, 7, 8, 9].map((v) => <path key={v} d={`M1756 ${504.5 - (v - 2) * 9.43} h${v % 2 ? 2 : 3}`} stroke={AX} opacity="0.8" />)}
      {[2, 4, 6, 8].map((v) => <Label key={v} x="1747.2" y={505 - (v - 2) * 9.43}>{v}</Label>)}
      {[120, 140, 160, 180, 200, 220, 240, 260, 280, 300, 320].map((v) => <path key={v} d={`M${1807.5 + (v - 200) * 0.54} 505 v-${v % 100 ? 3 : 5}`} stroke={AX} />)}
      <Label x="1806.5" y="514.5">200</Label><Label x="1860.5" y="514.5">300</Label>
      <polyline points={scale(gr, 1540, 40, 3, 3)} fill="none" stroke="#50ff00" />
      <polyline points={scale(cy, 1540, 40, 3, 3)} fill="none" stroke="#00ffff" />
    </svg>
  );
}

function Plot1D() {
  const X = (v) => 381.3 + v * 1.0602;
  const Y = (v) => 1092.6 - v * 256.2;
  const r = rng(11);
  const zeros = [92, 103, 115.3, 127.7, 140, 152.2, 163.5];
  const hs = [0.09, 0.67, 1.81, 1.71, 0.575, 0.065];
  const a = [], b = [];
  for (let x = 1; x <= 512; x++) {
    let v = 0;
    for (let k = 0; k < 6; k++) if (x >= zeros[k] && x < zeros[k + 1]) v = hs[k] * Math.sin((Math.PI * (x - zeros[k])) / (zeros[k + 1] - zeros[k])) ** 2;
    if (v > 1.62) v = Math.max(v, v > 1.77 ? 1.805 : v);
    a.push(`${X(x).toFixed(1)},${Y(Math.max(v, r() * 0.012)).toFixed(1)}`);
    const w = Math.exp(-Math.LN2 * ((x - 327) / 17) ** 4);
    b.push(`${X(x).toFixed(1)},${Y(w + r() * 0.011).toFixed(1)}`);
  }
  const ys = ['0', '0.2', '0.4', '0.6', '0.8', '1', '1.2', '1.4', '1.6', '1.8'];
  return (
    <svg width="609" height="541" viewBox="337 610 609 541" className="block bg-black" shapeRendering="crispEdges">
      <path d="M359.5 610 V1114.5 H946" fill="none" stroke={AX} />
      {ys.map((v) => <g key={v}><path d={`M360 ${Y(+v)} h${v === '0' ? 5 : v === '1' ? 3 : 2}`} stroke={AX} /><Label x="354.5" y={Y(+v) + 0.6} a="end" s="10.5" w={v.length > 1 ? 15.5 : undefined}>{v}</Label></g>)}
      {[0, 100, 200, 300, 400, 500].map((v) => <g key={v}><path d={`M${X(v)} 1114 v-5`} stroke={AX} /><Label x={X(v) - 0.7} y="1123.5" s="10.5" w={v ? 17.3 : undefined}>{v}</Label></g>)}
      <Label x="652.5" y="1145.5" w={118}>photon wavelength (nm)</Label>
      <path d="M371 643.5 H392" stroke="#fff" /><path d="M371 665.5 H392" stroke="#f00" />
      <Label x="400" y="644" a="start" s="11.5" w={29.5}>CH00</Label><Label x="400" y="666" a="start" s="11.5" w={28.5}>CH01</Label>
      <polyline points={a.join(' ')} fill="none" stroke="#fff" />
      <polyline points={b.join(' ')} fill="none" stroke="#f00" />
      <polyline points={a.slice(165).join(' ')} fill="none" stroke="#fff" strokeDasharray="7 5" />
    </svg>
  );
}

function Plot0D() {
  const X = (v) => 1347.3 + v * 6.286;
  const Y = (v) => 1109.5 - v * 52.36;
  const r = rng(5);
  const a = [], b = [];
  for (let x = 0; x <= 86; x++) {
    a.push(`${X(x).toFixed(1)},${Y(0.01 + r() * 0.09).toFixed(1)}`);
    if (x < 57) b.push(`${X(x).toFixed(1)},${Y(0.02 + r() * 0.08).toFixed(1)}`);
  }
  const tail = '1044,1427 1060,1424 1075,1420 1090,1427 1108,1420 1120,1411 1135,1390 1152,1379 1168,1350 1195,1285 1210,1237 1226,1195 1243,1130 1258,1070 1275,980 1290,915 1305,840 1320,770 1337,700 1353,617 1368,560 1383,497 1397,432 1412,388 1430,335 1440,312 1458,265 1475,231 1490,210';
  return (
    <svg width="607" height="557" viewBox="1302 593 607 557" className="block bg-black" shapeRendering="crispEdges">
      <path d="M1324.5 592 V1131.5 H1909" fill="none" stroke={AX} />
      {[0, 1, 2, 3, 4, 5, 6, 7, 8, 9].map((v) => <g key={v}><path d={`M1325 ${Y(v)} h${v === 0 ? 5 : 2}`} stroke={AX} /><Label x="1319.2" y={Y(v) + 0.8} a="end">{v}</Label></g>)}
      {[0, 10, 20, 30, 40, 50, 60, 70, 80].map((v) => <g key={v}><path d={`M${X(v)} 1131 v-${v === 0 ? 5 : 3}`} stroke={AX} /><Label x={X(v) - 0.7} y="1140.5" w={v ? 11.6 : undefined}>{v}</Label></g>)}
      <path d="M1363 642.5 H1384" stroke="#fff" /><path d="M1363 664.5 H1384" stroke="#f00" />
      <Label x="1392" y="643" a="start" s="11.5" w={25.5}>dat0</Label><Label x="1392" y="665" a="start" s="11.5" w={31}>data1</Label>
      <polyline points={a.join(' ')} fill="none" stroke="#fff" />
      <polyline points={b.join(' ') + ' ' + scale(tail, 1280, 530, 2.45, 2.485)} fill="none" stroke="#f00" />
    </svg>
  );
}

/* ---------- viewers ---------- */

function Viewer2D() {
  const tools = [
    [<div className="h-[16px] w-[24px] bg-[#ff0000]" />, true], [<div className="h-[16px] w-[24px] bg-[#00a000]" />], [<div className="h-[16px] w-[24px] bg-[#0000ff]" />],
    [<RoiIcon />, true], [<RoiIcon />], [<Histo />], [<RoiDash />, true], [<Cube />], [<Zoom11 />], [<Crosshair />], [<Lasso />], [<VArrows />], [<HArrows />], [<Rotate />],
  ];
  return (
    <div className="flex flex-1">
      <VTab w={98}>Det2D Mock2D_0</VTab>
      <div className="flex flex-1 flex-col bg-[#19232d] pl-[5px] pr-[5px] pt-[5px]">
        <div className="flex h-[32px] shrink-0 bg-[#455364]">
          {tools.map(([ic, on], i) => <div key={i} className="flex w-[33px] items-center justify-center pr-[1px]"><div className={`flex h-[31px] w-[31px] items-center justify-center rounded-[4px] ${on ? 'bg-[#60798b]' : ''}`}>{ic}</div></div>)}
        </div>
        <div className="mt-px flex h-[9px] shrink-0 items-center justify-center bg-[#455364]"><Dash /></div>
        <div className="flex h-[424px] w-[758px] bg-[#455364]">
          <div className="flex w-[599px] flex-col">
            <div className="ml-[1px] h-[316px] w-[598px] rounded-[3px] border-2 border-[#19232d] pt-0"><Image2D /></div>
            <div className="flex h-[11px] items-center justify-center"><Dash /></div>
            <div className="ml-[1px]"><BottomProfile /></div>
          </div>
          <div className="flex w-[11px] justify-center"><div className="mt-[209px] h-[7px] w-px bg-[#9da9b5]" /></div>
          <div className="flex w-[138px] flex-col">
            <SideProfile />
            <div className="flex h-[12px] items-center justify-center"><Dash /></div>
            <LineoutSmall />
          </div>
          <div className="flex w-[10px] justify-center"><div className="mt-[209px] h-[7px] w-px bg-[#9da9b5]" /></div>
        </div>
      </div>
    </div>
  );
}

function Viewer1D() {
  const tools = [<ZoomRoi />, <Calculator />, <GlobeWave />, <Crosshair />, <ZoomGrey />, <div className="pt-[8px]"><Wave /></div>, <AxesIcon />];
  return (
    <div className="flex w-[629px] shrink-0 flex-col bg-[#19232d]">
      <div className="flex"><Tab w={73}>Det1D Mock1</Tab></div>
      <div className="mx-[9px] mt-[9px] flex h-[36px] bg-[#455364]">
        {tools.map((ic, i) => <div key={i} className="flex w-[33px] items-center justify-center pr-[1px]">{ic}</div>)}
      </div>
      <div className="mx-[9px] mt-px flex h-[9px] items-center justify-center bg-[#455364]"><Dash /></div>
      <div className="mx-[9px] border border-[#455364]"><Plot1D /></div>
    </div>
  );
}

function Viewer0D() {
  return (
    <div className="flex flex-1 flex-col bg-[#19232d]">
      <div className="flex"><Tab w={73}>Det0D Mock1</Tab></div>
      <div className="ml-[9px] mt-[9px] flex h-[22px] items-center">
        <div className="flex h-[22px] w-[71px] rounded-[4px] border border-[#455364]">
          <div className={`flex flex-1 items-center pl-[6px] pt-[2px] text-[10.5px] text-[#e0e1e3] ${TH}`}>200</div>
          <div className="flex w-[13px] flex-col border-l border-[#455364]">
            <div className="flex flex-1 items-center justify-center border-b border-[#455364]"><svg width="8" height="4"><path d="M0 4 L4 0 L8 4Z" fill="#455364" /></svg></div>
            <div className="flex flex-1 items-center justify-center border-t border-[#455364]"><svg width="8" height="4"><path d="M0 0 L4 4 L8 0Z" fill="#455364" /></svg></div>
          </div>
        </div>
        <div className="ml-px flex h-[20px] w-[24px] items-center justify-center rounded-[4px] bg-[#455364]"><Eraser /></div>
        <div className="flex h-[20px] w-[24px] items-center justify-center rounded-[4px] bg-[#455364]"><LcdRuler /></div>
      </div>
      <div className="ml-[9px] mt-[7px] w-[609px] rounded-[2px] border border-[#455364]"><Plot0D /></div>
    </div>
  );
}

/* ---------- left column ---------- */

function LeftColumn() {
  return (
    <div className="flex w-[306px] shrink-0 flex-col bg-[#19232d]">
      <div className="flex gap-[2px]"><Tab dim w={38}>Logger</Tab><Tab w={90}>Remote controls</Tab></div>
      <div className="mx-[3px] mt-[3px] flex h-[221px] rounded-[4px] border border-[#455364] p-[2px] pr-[4px]">
        <Tree rows={rowsLeft} split={119} />
        <div className="ml-[2px] flex"><VScroll handle={121} /></div>
      </div>
      <div className="mx-[3px] flex h-[11px] items-center justify-center bg-[#455364]"><Dash /></div>
      <div className="mx-[3px] flex h-[225px] flex-col overflow-hidden rounded-[4px] border border-[#455364] pr-[2px]">
        <div className={`flex h-[22px] items-center overflow-hidden pl-[5px] text-[12px] text-[#e0e1e3] ${UI}`}><T w={300}>2022/09/13 13:16:45: Preset mode (preset_default.xml) ha</T></div>
        <div className="mb-[4px] mt-auto flex h-[12px] items-center">
          <svg width="6" height="11" className="ml-[8px] block"><path d="M5.5 0.5 V10.5 L0.5 5.5 Z" fill="#455364" /></svg>
          <div className="ml-[4px] h-[12px] w-[262px] rounded-[4px] border border-[#455364]"><div className="h-full w-[202px] rounded-[4px] bg-[#60798b]" /></div>
          <svg width="6" height="11" className="ml-[7px] block"><path d="M0.5 0.5 V10.5 L5.5 5.5 Z" fill="#455364" /></svg>
        </div>
      </div>
    </div>
  );
}

const menus = [['File', 18, 26], ['Settings', 42, 50], ['Preset Modes', 71, 79], ['Overshoot Modes', 94, 102], ['ROI Modes', 58, 66.5], ['Remote/Shortcuts Control', 139, 146.5], ['Extensions', 56, 64.5], ['?', 5, 10]];

export default function App() {
  return (
    <div className="flex h-[1161px] w-[1920px] flex-col overflow-hidden bg-[#455364]">
      <Defs />
      <div className={`flex h-[23px] shrink-0 items-center bg-white text-[12px] text-black ${UI}`}>
        <svg width="15" height="13" viewBox="0 0 15 13" className="ml-[2px] block"><rect x="0.5" y="0.5" width="14" height="12" fill="#f2f2f2" stroke="#9aa0a4" /><rect x="2" y="3" width="7" height="8" fill="#2f7f78" /><rect x="10" y="3" width="3" height="8" fill="#cfd4d6" /></svg>
        <div className="ml-[6px] flex-1 pt-[1px]"><T w={197}>PyMoDAQ Dashboard: preset_default</T></div>
        <svg width="160" height="23" viewBox="1760 0 160 23" fill="none" stroke="#000" className="block" shapeRendering="crispEdges">
          <path d="M1799 11.5 H1808" /><path d="M1844.5 8.5 H1851.5 V15.5 H1844.5 Z M1846.5 8.5 V6.5 H1853.5 V13.5 H1851.5" />
          <path d="M1890.5 6 L1900 15.5 M1900 6 L1890.5 15.5" shapeRendering="auto" />
        </svg>
      </div>
      <div className={`flex h-[30px] shrink-0 items-center border-y border-[#19232d] bg-[#455364] pl-[7px] text-[12px] text-[#e0e1e3] ${UI}`}>
        {menus.map(([m, w, box]) => <div key={m} style={{ width: box }}><T w={w}>{m}</T></div>)}
      </div>

      <div className="flex h-[477px] shrink-0">
        <LeftColumn />
        <VSplit top={235} />
        <div className="flex w-[436px] shrink-0 flex-col">
          <div className="flex h-[244px] flex-col bg-[#19232d]">
            <div className="flex gap-[2px]"><Tab dim w={31}>Theta</Tab><Tab w={27}>Xaxis</Tab></div>
            <div className="mx-[3px] mt-[3px] h-[224px] rounded-b-[4px] border border-t-0 border-black">
              <div className="ml-[50px] mt-[11px] bg-[#19232d]"><Actuator name="Xaxis" value="0.000238902" valueW={234} /></div>
            </div>
          </div>
          <div className="flex h-[9px] items-center justify-center"><Dash /></div>
          <div className="flex h-[224px]">
            <VTab w={27}>Yaxis</VTab>
            <div className="flex-1 rounded-r-[4px] border border-l-0 border-black bg-[#19232d]">
              <div className="ml-[47px] mt-[10px]"><Actuator name="Yaxis" value="-0.000366598" valueW={249} /></div>
            </div>
          </div>
        </div>
        <VSplit top={235} />
        <DetSettings name="Det2D" status="Det2D: Stop Grab" statusW={90} rows={rows2D} split={138} width={345} scroll tabW={88} />
        <VSplit top={235} />
        <Viewer2D />
      </div>

      <div className="flex h-[9px] shrink-0 items-center justify-center"><Dash /></div>

      <div className="flex h-[621px] shrink-0">
        <DetSettings name="Det1D" status="Det1D: Snap" statusW={64} rows={rows1D} split={138} width={318} tabW={88} />
        <VSplit top={307} />
        <Viewer1D />
        <VSplit top={307} />
        <DetSettings name="Det0D" status="Det0D: Stop Grab" statusW={90} rows={rows0D} split={144} width={318} tabW={88} />
        <VSplit top={307} />
        <Viewer0D />
      </div>
      <div className="flex h-px bg-[#2b3844]"><div className="ml-[48px] w-[344px] bg-[#b0b4b8]" /></div>
    </div>
  );
}
